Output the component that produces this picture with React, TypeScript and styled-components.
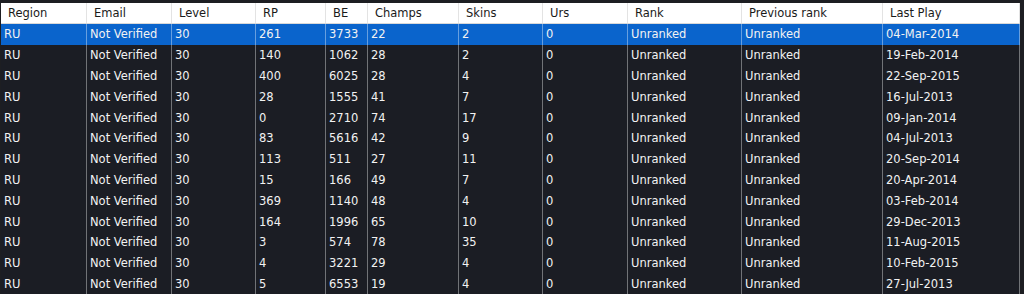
import React from 'react';
import styled, { createGlobalStyle } from 'styled-components';

const GlobalStyle = createGlobalStyle`
  html, body {
    margin: 0;
    padding: 0;
    background: #1b1d24;
    overflow: hidden;
  }
`;

const COLUMNS = '86px 85px 84px 70px 42px 91px 84px 85px 114px 141px 137px';

const Frame = styled.div`
  width: 1024px;
  height: 294px;
  box-sizing: border-box;
  padding: 3px 4px 0 1px;
  background: #1d1e22;
  overflow: hidden;
  font-family: 'DejaVu Sans', Verdana, sans-serif;
  font-size: 11.5px;
`;

const Table = styled.div`
  background: #1b1d24;
  height: 100%;
`;

const HeaderRow = styled.div`
  display: grid;
  grid-template-columns: ${COLUMNS};
  height: 20px;
  background: #ffffff;
  border-bottom: 1px solid #d9d9d9;
`;

const HeaderCell = styled.div`
  display: flex;
  align-items: center;
  padding-left: 7px;
  color: #1a1a1a;
  border-right: 1px solid #e3e3e3;
  white-space: nowrap;
  overflow: hidden;
`;

const Row = styled.div<{ $selected?: boolean }>`
  display: grid;
  grid-template-columns: ${COLUMNS};
  height: 20.8px;
  background: ${(p) => (p.$selected ? '#0a64cc' : 'transparent')};
  color: #f2f2f2;
`;

const Cell = styled.div`
  display: flex;
  align-items: center;
  padding-left: 3px;
  border-right: 1px solid rgba(255, 255, 255, 0.38);
  white-space: nowrap;
  overflow: hidden;
`;

const headers = [
  'Region',
  'Email',
  'Level',
  'RP',
  'BE',
  'Champs',
  'Skins',
  'Urs',
  'Rank',
  'Previous rank',
  'Last Play',
];

type Account = [number, number, number, number, string];

const accounts: Account[] = [
  [261, 3733, 22, 2, '04-Mar-2014'],
  [140, 1062, 28, 2, '19-Feb-2014'],
  [400, 6025, 28, 4, '22-Sep-2015'],
  [28, 1555, 41, 7, '16-Jul-2013'],
  [0, 2710, 74, 17, '09-Jan-2014'],
  [83, 5616, 42, 9, '04-Jul-2013'],
  [113, 511, 27, 11, '20-Sep-2014'],
  [15, 166, 49, 7, '20-Apr-2014'],
  [369, 1140, 48, 4, '03-Feb-2014'],
  [164, 1996, 65, 10, '29-Dec-2013'],
  [3, 574, 78, 35, '11-Aug-2015'],
  [4, 3221, 29, 4, '10-Feb-2015'],
  [5, 6553, 19, 4, '27-Jul-2013'],
];

export default function App() {
  return (
    <Frame>
      <GlobalStyle />
      <Table>
        <HeaderRow>
          {headers.map((h) => (
            <HeaderCell key={h}>{h}</HeaderCell>
          ))}
        </HeaderRow>
        {accounts.map(([rp, be, champs, skins, lastPlay], i) => (
          <Row key={i} $selected={i === 0}>
            <Cell>RU</Cell>
            <Cell>Not Verified</Cell>
            <Cell>30</Cell>
            <Cell>{rp}</Cell>
            <Cell>{be}</Cell>
            <Cell>{champs}</Cell>
            <Cell>{skins}</Cell>
            <Cell>0</Cell>
            <Cell>Unranked</Cell>
            <Cell>Unranked</Cell>
            <Cell>{lastPlay}</Cell>
          </Row>
        ))}
      </Table>
    </Frame>
  );
}
